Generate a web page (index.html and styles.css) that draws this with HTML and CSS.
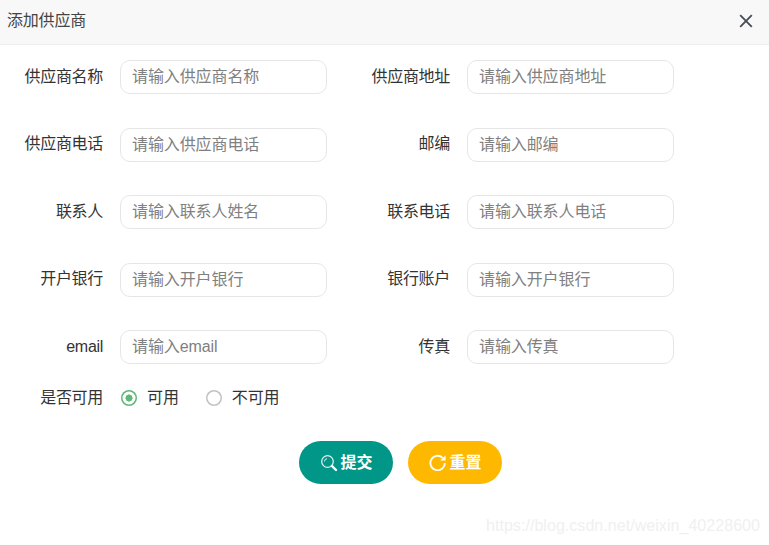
FILE: index.html
```html
<!DOCTYPE html>
<html lang="zh">
<head>
<meta charset="utf-8">
<title>添加供应商</title>
<link rel="stylesheet" href="styles.css">
</head>
<body>
<div class="dialog">
  <header class="title-bar">
    <span class="title">添加供应商</span>
    <svg class="close" width="14" height="14" viewBox="0 0 14 14"><path d="M1.2 1.2 12.8 12.8M12.8 1.2 1.2 12.8" stroke="#4a4d5a" stroke-width="1.9" fill="none"/></svg>
  </header>
  <form class="form">
    <div class="grid">
      <label class="field"><span class="label">供应商名称</span><input class="input" placeholder="请输入供应商名称"></label>
      <label class="field"><span class="label">供应商地址</span><input class="input" placeholder="请输入供应商地址"></label>
      <label class="field"><span class="label">供应商电话</span><input class="input" placeholder="请输入供应商电话"></label>
      <label class="field"><span class="label">邮编</span><input class="input" placeholder="请输入邮编"></label>
      <label class="field"><span class="label">联系人</span><input class="input" placeholder="请输入联系人姓名"></label>
      <label class="field"><span class="label">联系电话</span><input class="input" placeholder="请输入联系人电话"></label>
      <label class="field"><span class="label">开户银行</span><input class="input" placeholder="请输入开户银行"></label>
      <label class="field"><span class="label">银行账户</span><input class="input" placeholder="请输入开户银行"></label>
      <label class="field"><span class="label">email</span><input class="input" placeholder="请输入email"></label>
      <label class="field"><span class="label">传真</span><input class="input" placeholder="请输入传真"></label>
    </div>
    <div class="radio-row">
      <span class="label">是否可用</span>
      <span class="radio radio-on"></span><span class="radio-text">可用</span>
      <span class="radio radio-off"></span><span class="radio-text">不可用</span>
    </div>
    <div class="actions">
      <button type="button" class="btn btn-green">
        <svg class="btn-icon" width="18" height="18" viewBox="0 0 18 18" fill="none" stroke="#fff"><circle cx="7.5" cy="7.5" r="5.8" stroke-width="1.3" opacity=".85"/><path d="M4.5 7.5A3 3 0 0 1 7 4.6" stroke-width="1" opacity=".85"/><path d="M12 12 16 16" stroke-width="2.4" stroke-linecap="round"/></svg>提交
      </button>
      <button type="button" class="btn btn-yellow">
        <svg class="btn-icon" width="18" height="18" viewBox="0 0 18 18" fill="none" stroke="#fff"><path d="M15.8 9A7.2 7.2 0 1 1 13.6 3.8" stroke-width="1.8"/><path d="M16.6 1.2V6.6H11.2Z" fill="#fff" stroke="none"/></svg>重置
      </button>
    </div>
  </form>
  <div class="watermark">https://blog.csdn.net/weixin_40228600</div>
</div>
</body>
</html>
```
FILE: styles.css
```css
* { box-sizing: border-box; }
html, body { margin: 0; padding: 0; background: #fff; }
body {
  width: 769px;
  height: 545px;
  overflow: hidden;
  font-family: "Liberation Sans", Arial, "Noto Sans CJK SC", sans-serif;
  font-size: 16px;
  color: #333;
}
.dialog { position: relative; height: 545px; }
.title-bar {
  height: 45px;
  background: #f8f8f8;
  border-bottom: 1px solid #eee;
  padding: 0 16px 0 7px;
  display: flex;
  align-items: center;
  justify-content: space-between;
}
.title { font-size: 16px; line-height: 20px; letter-spacing: -0.2px; color: #444; padding-bottom: 2px; }
.close { position: relative; top: -1px; }
.form { padding-top: 15px; }
.grid {
  display: grid;
  grid-template-columns: 347px 347px;
  grid-auto-rows: 34px;
  row-gap: 33.5px;
}
.field { display: flex; align-items: center; height: 34px; }
.label {
  width: 103px;
  line-height: 20px;
  padding-bottom: 1px;
  text-align: right;
  font-size: 16px;
  letter-spacing: -0.3px;
  color: #333;
  flex: none;
}
.input {
  width: 207px;
  height: 34px;
  margin-left: 17px;
  padding: 0 11px;
  border: 1px solid #e6e6e6;
  border-radius: 10px;
  background: #fff;
  font: inherit;
  font-size: 16px;
  letter-spacing: -0.1px;
  color: #333;
  outline: none;
}
.input::placeholder { color: #808080; opacity: 1; }
.radio-row {
  display: flex;
  align-items: center;
  height: 20px;
  margin-top: 24px;
}
.radio {
  width: 16px;
  height: 16px;
  border-radius: 50%;
  flex: none;
}
.radio-on {
  margin-left: 18px;
  box-shadow: inset 0 0 0 1.5px #5fb878;
  background: radial-gradient(circle, #5fb878 0 3.3px, #fff 3.8px);
}
.radio-off { margin-left: 27px; box-shadow: inset 0 0 0 1.5px #c2c2c2; background: #fff; }
.radio-text { margin-left: 10px; line-height: 20px; padding-bottom: 1px; font-size: 16px; letter-spacing: -0.1px; color: #333; }
.actions {
  display: flex;
  gap: 15px;
  margin-top: 33px;
  padding-left: 299px;
}
.btn {
  width: 94px;
  height: 43px;
  border: 0;
  border-radius: 22px;
  display: flex;
  align-items: center;
  justify-content: center;
  color: #fff;
  font: inherit;
  font-size: 16px;
  font-weight: bold;
  padding: 0 0 3px 1px;
}
.btn-icon { margin: 3px 2px 0 0; }
.btn-green { background: #009688; }
.btn-yellow { background: #ffb800; }
.watermark {
  position: absolute;
  right: 9px;
  top: 517px;
  font-size: 16px;
  letter-spacing: 0.05px;
  color: #f0f0f0;
}
```
